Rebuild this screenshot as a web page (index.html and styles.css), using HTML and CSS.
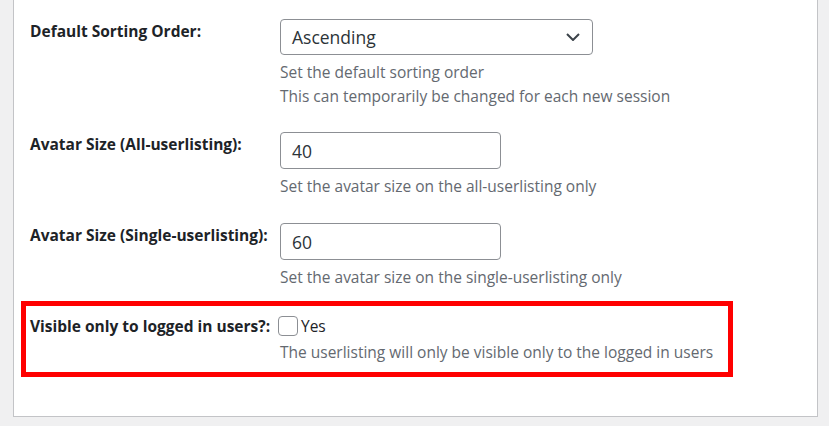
FILE: index.html
```html
<!DOCTYPE html>
<html lang="en">
<head>
<meta charset="utf-8">
<title>Userlisting settings</title>
<link rel="stylesheet" href="styles.css">
</head>
<body>
<div class="panel">
  <div class="row row-1">
    <div class="label">Default Sorting Order:</div>
    <div class="field">
      <div class="select">
        <span class="select-value">Ascending</span>
        <svg class="chevron" width="14" height="8" viewBox="0 0 14 8"><path d="M1 1 L7 7 L13 1" fill="none" stroke="#3c434a" stroke-width="2"/></svg>
      </div>
      <p class="desc">Set the default sorting order<br>This can temporarily be changed for each new session</p>
    </div>
  </div>
  <div class="row row-2">
    <div class="label">Avatar Size (All-userlisting):</div>
    <div class="field">
      <div class="input">40</div>
      <p class="desc">Set the avatar size on the all-userlisting only</p>
    </div>
  </div>
  <div class="row row-3">
    <div class="label">Avatar Size (Single-userlisting):</div>
    <div class="field">
      <div class="input">60</div>
      <p class="desc">Set the avatar size on the single-userlisting only</p>
    </div>
  </div>
  <div class="row row-4 highlight">
    <div class="label">Visible only to logged in users?:</div>
    <div class="field">
      <label class="check"><span class="box"></span><span class="check-text">Yes</span></label>
      <p class="desc desc-tight">The userlisting will only be visible only to the logged in users</p>
    </div>
  </div>
</div>
</body>
</html>
```
FILE: styles.css
```css
html, body {
  margin: 0;
  padding: 0;
}
body {
  background: #f0f0f1;
  font-family: "Open Sans", "Noto Sans", sans-serif;
  color: #1d2327;
  height: 426px;
  overflow: hidden;
}
.panel {
  margin-left: 13px;
  width: 805px;
  box-sizing: border-box;
  background: #fff;
  border: 1px solid #c3c4c7;
  border-top: none;
  padding: 0 0 39px 16px;
}
.row {
  display: grid;
  grid-template-columns: 250px 1fr;
  align-items: start;
}
.row-1 { padding-top: 19px; }
.row-2 { margin-top: 24px; }
.row-3 { margin-top: 25px; }
.row-4 { margin-top: 12px; }
.label {
  font-weight: 700;
  font-size: 15.5px;
  line-height: 24px;
  color: #1d2327;
  white-space: nowrap;
}
.field {
  display: flex;
  flex-direction: column;
  align-items: flex-start;
}
.select {
  width: 313px;
  height: 36px;
  box-sizing: border-box;
  border: 1px solid #8c8f94;
  border-radius: 4px;
  display: flex;
  align-items: center;
  justify-content: space-between;
  padding: 0 12px 0 11px;
  font-size: 17.5px;
  color: #2c3338;
}
.chevron { display: block; }
.input {
  width: 221px;
  height: 37px;
  box-sizing: border-box;
  border: 1px solid #8c8f94;
  border-radius: 4px;
  display: flex;
  align-items: center;
  padding: 0 11px;
  font-size: 17.5px;
  color: #2c3338;
}
.desc {
  margin: 5px 0 0;
  font-size: 15.5px;
  line-height: 24px;
  color: #646970;
}
.desc-tight { margin-top: 2px; }
.highlight {
  margin-left: -9px;
  width: 712px;
  box-sizing: border-box;
  border: 5px solid #ff0000;
  padding: 8px 0 8px 4px;
}
.check {
  display: flex;
  align-items: center;
  height: 24px;
  gap: 3px;
  font-size: 15.5px;
  color: #1d2327;
}
.box {
  width: 20px;
  height: 20px;
  box-sizing: border-box;
  border: 1px solid #8c8f94;
  border-radius: 4px;
  background: #fff;
  margin-left: -2px;
}
```
